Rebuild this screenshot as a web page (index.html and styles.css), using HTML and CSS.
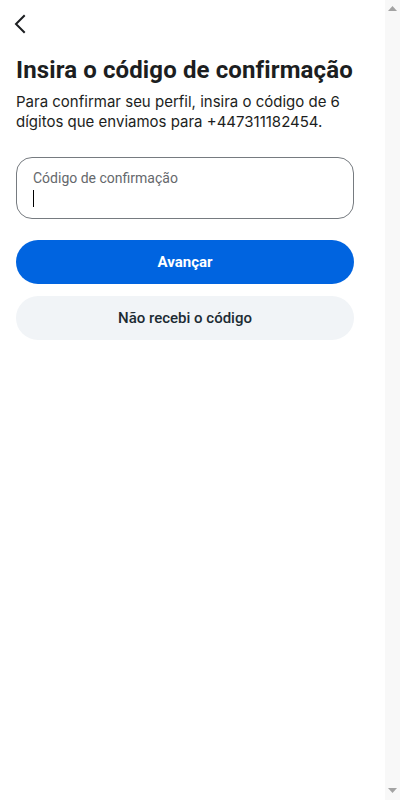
FILE: index.html
```html
<!DOCTYPE html>
<html lang="pt">
<head>
<meta charset="utf-8">
<title>Código de confirmação</title>
<link rel="stylesheet" href="styles.css">
</head>
<body>
<div class="page">
  <div class="header">
    <button class="back" aria-label="Voltar">
      <svg width="24" height="24" viewBox="0 0 24 24" fill="none"><path d="M12 4 L4 12 L12 20" stroke="#1c1e21" stroke-width="2" stroke-linecap="square" stroke-linejoin="miter"/></svg>
    </button>
  </div>
  <h1 class="title">Insira o código de confirmação</h1>
  <p class="desc">Para confirmar seu perfil, insira o código de 6 dígitos que enviamos para +447311182454.</p>
  <div class="field">
    <span class="label">Código de confirmação</span>
    <span class="caret"></span>
  </div>
  <button class="btn primary">Avançar</button>
  <button class="btn secondary">Não recebi o código</button>
</div>
<div class="scrollbar" aria-hidden="true">
  <svg class="arrow" width="9" height="5" viewBox="0 0 9 5"><polygon points="0,5 9,5 4.5,0" fill="#a3a3a3"/></svg>
  <svg class="arrow" width="9" height="5" viewBox="0 0 9 5"><polygon points="0,0 9,0 4.5,5" fill="#a3a3a3"/></svg>
</div>
</body>
</html>
```
FILE: styles.css
```css
body {
  margin: 0;
  background: #ffffff;
  font-family: Roboto, "Noto Sans", Arial, sans-serif;
  color: #1c1e21;
}
.scrollbar {
  position: fixed;
  top: 0;
  right: 0;
  bottom: 0;
  width: 15px;
  background: #f8f8f8;
  display: flex;
  flex-direction: column;
  justify-content: space-between;
  align-items: center;
  padding: 6px 0 7px;
  box-sizing: border-box;
}
.arrow {
  display: block;
}
.page {
  width: 338px;
  padding: 0 16px;
  display: flex;
  flex-direction: column;
}
.header {
  height: 48px;
  display: flex;
  align-items: center;
}
.back {
  width: 24px;
  height: 24px;
  padding: 0;
  margin-left: -4px;
  border: 0;
  background: none;
  display: flex;
}
.title {
  margin: 8px 0 0;
  font-size: 24px;
  line-height: 28px;
  font-weight: 700;
  letter-spacing: 0.12px;
  color: #1c1e21;
}
.desc {
  margin: 8px 0 0;
  font-family: Inter, Roboto, sans-serif;
  font-size: 15px;
  line-height: 20px;
  color: #1c1e21;
}
.field {
  margin-top: 25px;
  height: 62px;
  box-sizing: border-box;
  border: 1px solid #767b80;
  border-radius: 16px;
  padding: 11px 16px 0;
  display: flex;
  flex-direction: column;
}
.label {
  font-size: 14px;
  line-height: 18px;
  color: #65686c;
}
.caret {
  margin-top: 3px;
  width: 1px;
  height: 17px;
  background: #000;
}
.btn {
  height: 44px;
  border: 0;
  border-radius: 22px;
  font-family: inherit;
  font-size: 15px;
  cursor: pointer;
}
.primary {
  margin-top: 21px;
  background: #0064e0;
  color: #ffffff;
  font-weight: 700;
}
.secondary {
  margin-top: 12px;
  background: #f1f4f7;
  color: #1c2b33;
  font-weight: 500;
}
```
